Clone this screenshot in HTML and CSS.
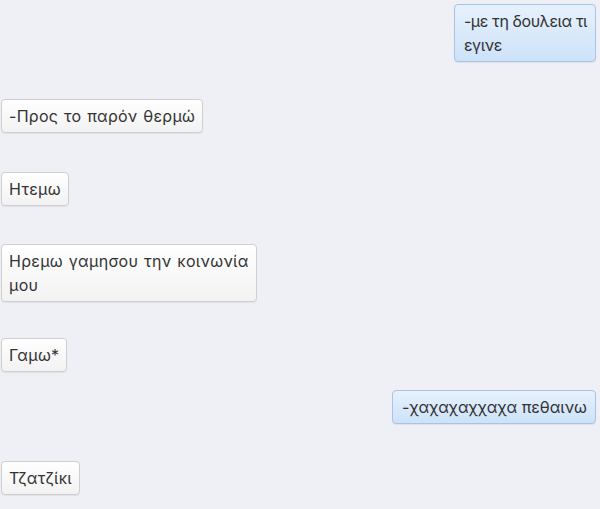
FILE: index.html
```html
<!DOCTYPE html>
<html lang="el">
<head>
<meta charset="utf-8">
<link rel="stylesheet" href="styles.css">
</head>
<body>
<div class="chat">
  <div class="msg out m1"><div class="bubble tight">-με τη δουλεια τι<br>εγινε</div></div>
  <div class="msg in m2"><div class="bubble">-Προς το παρόν θερμώ</div></div>
  <div class="msg in m3"><div class="bubble">Ητεμω</div></div>
  <div class="msg in m4"><div class="bubble">Ηρεμω γαμησου την κοινωνία<br>μου</div></div>
  <div class="msg in m5"><div class="bubble">Γαμω*</div></div>
  <div class="msg out m6"><div class="bubble">-χαχαχαχχαχα πεθαινω</div></div>
  <div class="msg in m7"><div class="bubble">Τζατζίκι</div></div>
</div>
</body>
</html>
```
FILE: styles.css
```css
html, body {
  margin: 0;
  padding: 0;
  background: #eef0f5;
}
body {
  width: 600px;
  height: 509px;
  overflow: hidden;
  font-family: Inter, "Noto Sans", sans-serif;
  font-size: 16px;
  color: #333;
}
.chat {
  display: flex;
  flex-direction: column;
  padding: 4px 4px 0 1px;
}
.msg {
  display: flex;
}
.msg.out { justify-content: flex-end; }
.msg.in { justify-content: flex-start; }
.bubble {
  padding: 4px 7px;
  line-height: 24px;
  border-radius: 4px;
  border: 1px solid #cfcfd2;
  background: linear-gradient(#ffffff, #f2f2f2);
  box-shadow: 0 1px 1px rgba(0,0,0,0.06);
}
.msg.in .bubble {
  letter-spacing: 0.3px;
  word-spacing: 1px;
}
.msg.out .bubble {
  border-color: #a8c3e3;
  background: linear-gradient(#e7f1fc, #cde2f9);
  padding: 4px 8px 4px 9px;
}
.msg.out .bubble.tight {
  letter-spacing: -0.4px;
}
.m2 { margin-top: 37px; }
.m3 { margin-top: 39px; }
.m4 { margin-top: 38px; }
.m5 { margin-top: 36px; }
.m6 { margin-top: 18px; }
.m7 { margin-top: 37px; }
```
